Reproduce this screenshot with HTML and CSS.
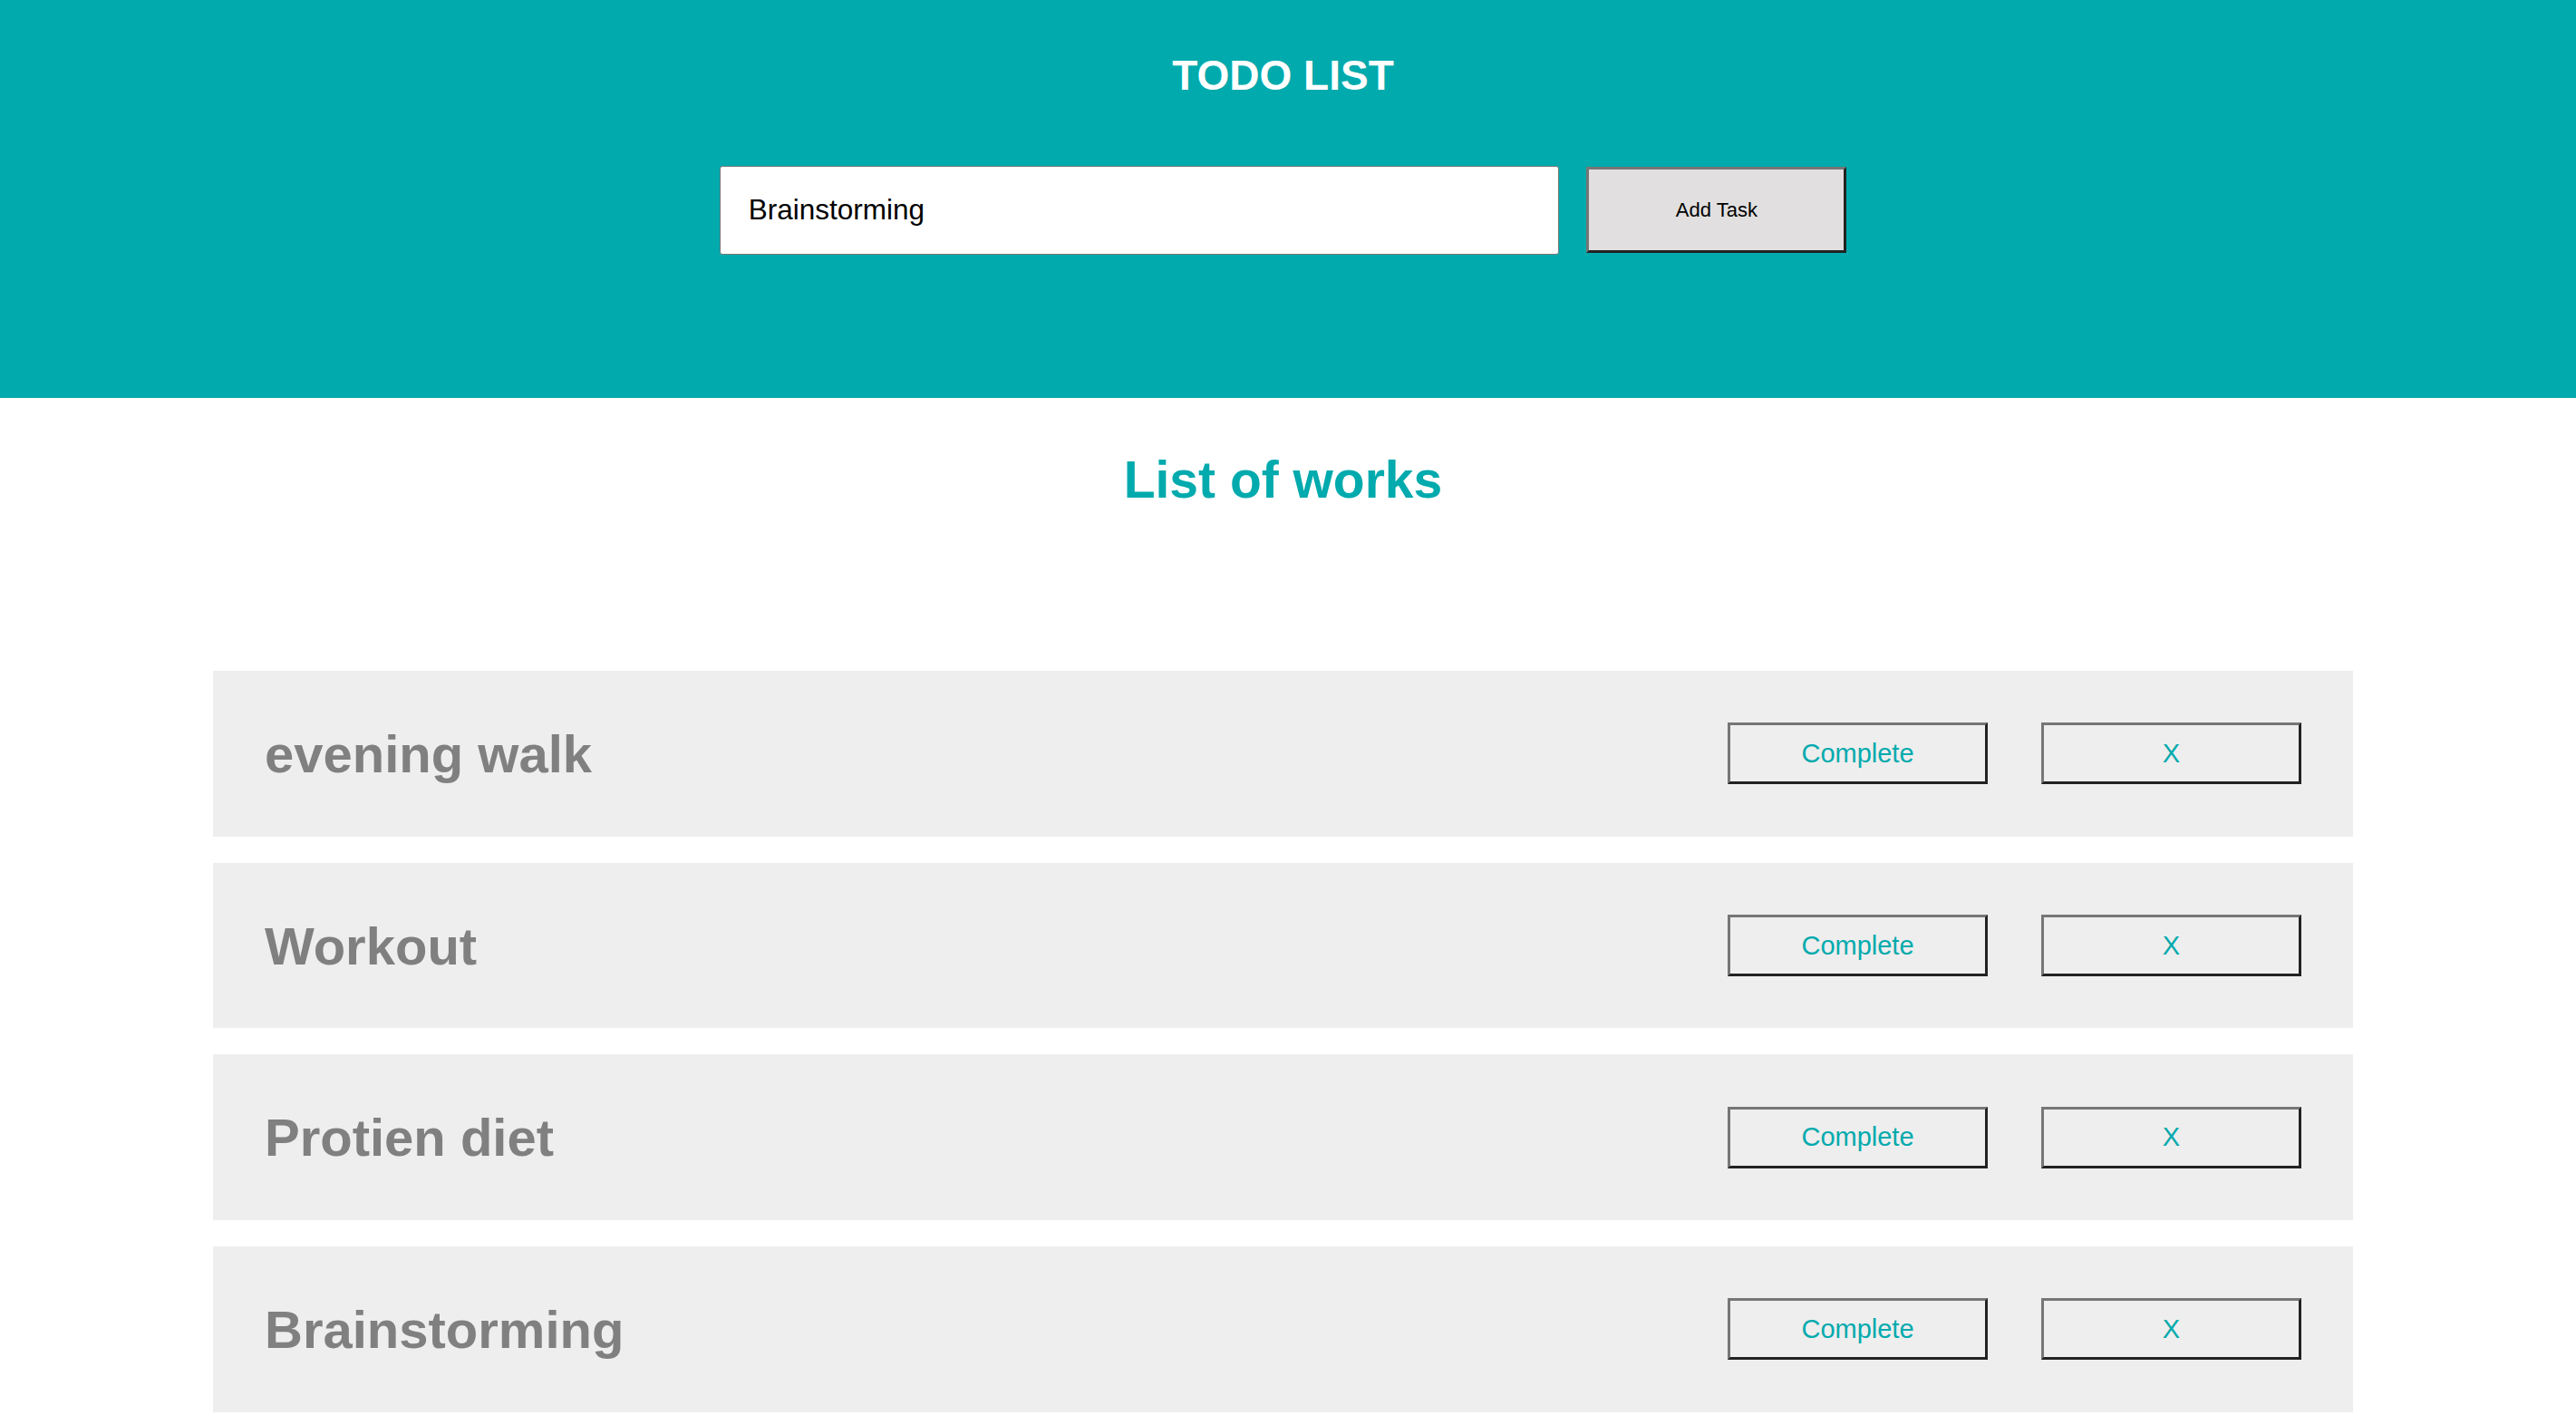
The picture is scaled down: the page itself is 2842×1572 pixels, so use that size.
FILE: index.html
```html
<!DOCTYPE html>
<html lang="en">
<head>
<meta charset="utf-8">
<title>Todo List</title>
<link rel="stylesheet" href="styles.css">
</head>
<body>
  <header class="header">
    <div class="header-inner">
      <h1 class="title">TODO LIST</h1>
      <form class="add-form">
        <input class="task-input" type="text" value="Brainstorming">
        <button class="add-btn" type="button">Add Task</button>
      </form>
    </div>
  </header>
  <main class="main">
    <h2 class="list-title">List of works</h2>
    <ul class="tasks">
      <li class="task">
        <span class="task-name">evening walk</span>
        <div class="task-actions">
          <button class="task-btn" type="button">Complete</button>
          <button class="task-btn" type="button">X</button>
        </div>
      </li>
      <li class="task">
        <span class="task-name">Workout</span>
        <div class="task-actions">
          <button class="task-btn" type="button">Complete</button>
          <button class="task-btn" type="button">X</button>
        </div>
      </li>
      <li class="task">
        <span class="task-name">Protien diet</span>
        <div class="task-actions">
          <button class="task-btn" type="button">Complete</button>
          <button class="task-btn" type="button">X</button>
        </div>
      </li>
      <li class="task">
        <span class="task-name">Brainstorming</span>
        <div class="task-actions">
          <button class="task-btn" type="button">Complete</button>
          <button class="task-btn" type="button">X</button>
        </div>
      </li>
    </ul>
  </main>
</body>
</html>
```

FILE: styles.css
```css
* {
  box-sizing: border-box;
}

html, body {
  margin: 0;
  padding: 0;
  background: #ffffff;
  font-family: "Liberation Sans", Arial, Helvetica, sans-serif;
}

.header {
  background: #01aaad;
  height: 439px;
  padding-top: 60px;
}

.header-inner {
  padding-right: 11px;
  display: flex;
  flex-direction: column;
  align-items: center;
}

.title {
  margin: 0;
  color: #ffffff;
  font-size: 46px;
  line-height: 46px;
  font-weight: 700;
}

.add-form {
  margin: 76.7px 0 0 0;
  display: flex;
  align-items: center;
  gap: 30.7px;
}

.task-input {
  width: 926px;
  height: 98px;
  border: 1px solid #767676;
  border-radius: 3px;
  padding: 0 0 0 31px;
  font-family: "Liberation Sans", Arial, sans-serif;
  font-size: 31.5px;
  color: #000000;
  background: #ffffff;
  outline: none;
}

.add-btn {
  width: 287px;
  height: 95px;
  background: #e1dfdf;
  border-style: solid;
  border-width: 3px;
  border-color: #767676 #222222 #222222 #767676;
  font-family: "Liberation Sans", Arial, sans-serif;
  font-size: 22px;
  color: #000000;
  padding: 0;
}

.main {
  padding-right: 11px;
}

.list-title {
  margin: 61.6px 0 0 0;
  text-align: center;
  color: #01aaad;
  font-size: 57px;
  line-height: 57px;
  font-weight: 700;
}

.tasks {
  list-style: none;
  margin: 182.4px auto 0;
  padding: 0;
  width: 2361px;
  display: flex;
  flex-direction: column;
  gap: 29px;
}

.task {
  height: 182.7px;
  background: #eeeeee;
  display: flex;
  align-items: center;
  justify-content: space-between;
  padding: 0 57px;
}

.task-name {
  color: #808080;
  font-size: 58px;
  font-weight: 700;
}

.task-actions {
  display: flex;
  gap: 59px;
}

.task-btn {
  width: 287px;
  height: 68px;
  background: transparent;
  border-style: solid;
  border-width: 3px;
  border-color: #767676 #222222 #222222 #767676;
  font-family: "Liberation Sans", Arial, sans-serif;
  font-size: 29px;
  color: #01aaad;
  padding: 0;
}
```
